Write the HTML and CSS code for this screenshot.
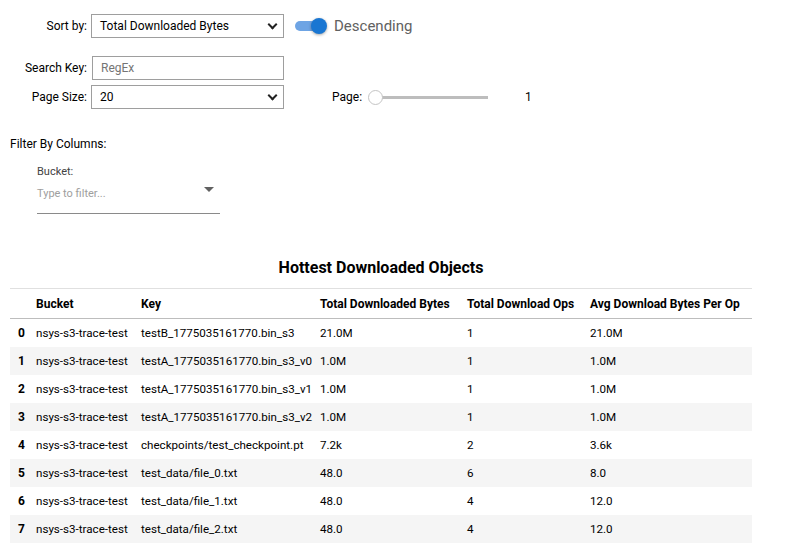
FILE: index.html
```html
<!DOCTYPE html>
<html lang="en">
<head>
<meta charset="UTF-8">
<title>Hottest Downloaded Objects</title>
<link rel="stylesheet" href="styles.css">
</head>
<body>
<div class="controls">
  <div class="row row-sort">
    <label class="lbl">Sort by:</label>
    <div class="select">Total Downloaded Bytes<span class="chev"></span></div>
    <div class="toggle"><span class="track"></span><span class="knob"></span></div>
    <span class="toggle-text">Descending</span>
  </div>
  <div class="row row-search">
    <label class="lbl">Search Key:</label>
    <div class="input">RegEx</div>
  </div>
  <div class="row row-page">
    <label class="lbl">Page Size:</label>
    <div class="select">20<span class="chev"></span></div>
    <label class="lbl lbl-page">Page:</label>
    <div class="slider"><span class="thumb"></span><span class="rail"></span></div>
    <span class="slider-val">1</span>
  </div>
</div>

<div class="filters">
  <div class="filters-title">Filter By Columns:</div>
  <div class="combo">
    <div class="combo-label">Bucket:</div>
    <div class="combo-field">Type to filter...<span class="caret"></span></div>
  </div>
</div>

<h3 class="table-title">Hottest Downloaded Objects</h3>
<table class="data">
  <colgroup>
    <col class="c-idx"><col class="c-bucket"><col class="c-key"><col class="c-bytes"><col class="c-ops"><col class="c-avg">
  </colgroup>
  <thead>
    <tr><th></th><th>Bucket</th><th>Key</th><th>Total Downloaded Bytes</th><th>Total Download Ops</th><th>Avg Download Bytes Per Op</th></tr>
  </thead>
  <tbody>
    <tr><th>0</th><td>nsys-s3-trace-test</td><td>testB_1775035161770.bin_s3</td><td>21.0M</td><td>1</td><td>21.0M</td></tr>
    <tr><th>1</th><td>nsys-s3-trace-test</td><td>testA_1775035161770.bin_s3_v0</td><td>1.0M</td><td>1</td><td>1.0M</td></tr>
    <tr><th>2</th><td>nsys-s3-trace-test</td><td>testA_1775035161770.bin_s3_v1</td><td>1.0M</td><td>1</td><td>1.0M</td></tr>
    <tr><th>3</th><td>nsys-s3-trace-test</td><td>testA_1775035161770.bin_s3_v2</td><td>1.0M</td><td>1</td><td>1.0M</td></tr>
    <tr><th>4</th><td>nsys-s3-trace-test</td><td>checkpoints/test_checkpoint.pt</td><td>7.2k</td><td>2</td><td>3.6k</td></tr>
    <tr><th>5</th><td>nsys-s3-trace-test</td><td>test_data/file_0.txt</td><td>48.0</td><td>6</td><td>8.0</td></tr>
    <tr><th>6</th><td>nsys-s3-trace-test</td><td>test_data/file_1.txt</td><td>48.0</td><td>4</td><td>12.0</td></tr>
    <tr><th>7</th><td>nsys-s3-trace-test</td><td>test_data/file_2.txt</td><td>48.0</td><td>4</td><td>12.0</td></tr>
  </tbody>
</table>
</body>
</html>
```

FILE: styles.css
```css
body {
  margin: 0;
  padding: 14px 10px 0;
  font-family: Roboto, "Noto Sans", sans-serif;
  font-size: 12px;
  color: #000;
  background: #fff;
}

.row {
  display: flex;
  align-items: center;
  height: 24px;
}

.row-search {
  margin-top: 18px;
}

.row-page {
  margin-top: 5px;
}

.lbl {
  width: 77px;
  text-align: right;
  padding-right: 4px;
  color: #000;
  white-space: nowrap;
}

.select,
.input {
  position: relative;
  box-sizing: border-box;
  width: 193px;
  height: 24px;
  border: 1px solid #9e9e9e;
  padding: 0 8px;
  line-height: 22px;
  font-size: 12px;
}

.input {
  color: #757575;
  margin-left: 1px;
  width: 192px;
}

.chev {
  position: absolute;
  right: 7px;
  top: 6px;
  width: 5px;
  height: 5px;
  border-right: 2px solid #222;
  border-bottom: 2px solid #222;
  transform: rotate(45deg);
}

.toggle {
  position: relative;
  width: 34px;
  height: 24px;
  margin-left: 11px;
}

.track {
  position: absolute;
  left: 0;
  top: 7px;
  width: 30px;
  height: 10px;
  border-radius: 5px;
  background: #6ea4e4;
}

.knob {
  position: absolute;
  left: 16px;
  top: 4px;
  width: 16px;
  height: 16px;
  border-radius: 50%;
  background: #1976d2;
  box-shadow: 0 1px 3px rgba(0, 0, 0, 0.35);
}

.toggle-text {
  margin-left: 5px;
  font-size: 15px;
  color: #616161;
}

.lbl-page {
  width: auto;
  margin-left: 48px;
  padding-right: 6px;
}

.slider {
  position: relative;
  width: 120px;
  height: 24px;
}

.rail {
  position: absolute;
  left: 12px;
  right: 0;
  top: 11px;
  height: 3px;
  background: #bdbdbd;
}

.thumb {
  position: absolute;
  left: 0;
  top: 5px;
  width: 13px;
  height: 13px;
  border-radius: 50%;
  border: 1px solid #c4c4c4;
  background: #fff;
  z-index: 1;
}

.slider-val {
  margin-left: 37px;
}

.filters {
  margin-top: 28px;
}

.filters-title {
  font-size: 12px;
}

.combo {
  margin-left: 27px;
  margin-top: 14px;
  width: 183px;
}

.combo-label {
  font-size: 11px;
  color: #424242;
}

.combo-field {
  position: relative;
  margin-top: 6px;
  padding-top: 3px;
  height: 26px;
  border-bottom: 1px solid #8a8a8a;
  font-size: 11px;
  color: #9e9e9e;
}

.caret {
  position: absolute;
  right: 6px;
  top: 3px;
  border-left: 5px solid transparent;
  border-right: 5px solid transparent;
  border-top: 5px solid #616161;
}

.table-title {
  width: 742px;
  margin: 44px 0 0;
  text-align: center;
  font-size: 16px;
  font-weight: 700;
}

.data {
  width: 742px;
  margin-top: 11px;
  border-collapse: collapse;
  table-layout: fixed;
  border-top: 1px solid #e0e0e0;
  font-size: 12px;
}

.c-idx { width: 20px; }
.c-bucket { width: 105px; }
.c-key { width: 179px; }
.c-bytes { width: 147px; }
.c-ops { width: 123px; }
.c-avg { width: 168px; }

.data th,
.data td {
  height: 28px;
  padding: 0 6px;
  text-align: left;
  white-space: nowrap;
}

.data td {
  font-size: 11.6px;
  padding-right: 0;
}

.data thead th {
  height: 29px;
  font-weight: 700;
  border-bottom: 1px solid #bdbdbd;
}

.data tbody th {
  font-weight: 700;
  padding-left: 8px;
  padding-right: 0;
}

.data tbody tr:nth-child(even) {
  background: #f5f5f5;
}
```
